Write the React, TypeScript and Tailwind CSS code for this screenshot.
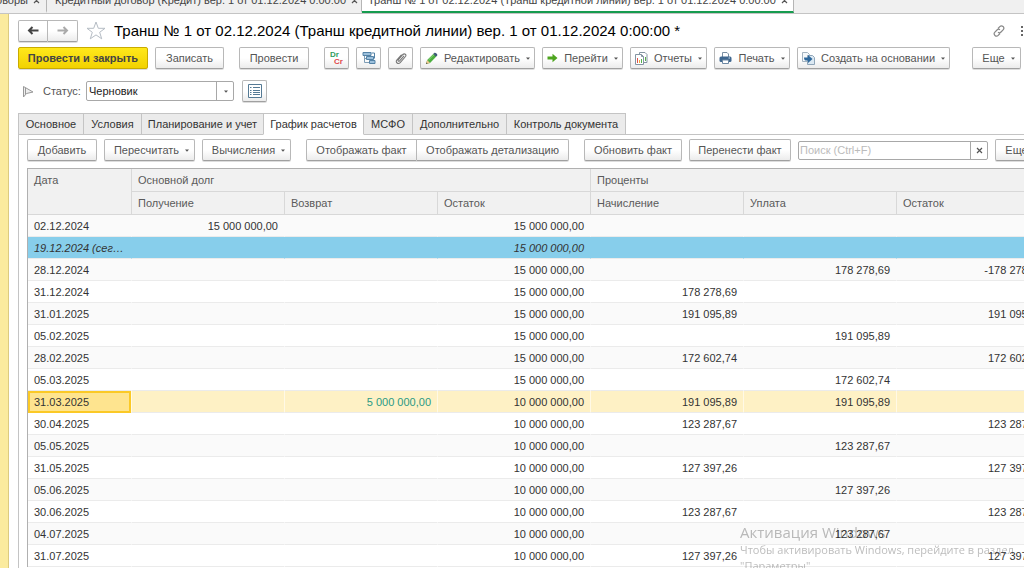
import type { ReactNode } from 'react';
import clsx from 'clsx';

const windowTabs = [
  { title: 'Договоры', width: 'w-[47px] justify-end', active: false },
  { title: 'Кредитный договор (Кредит) вер. 1 от 01.12.2024 0:00:00', width: 'w-[315px] pl-2', active: false },
  { title: 'Транш № 1 от 02.12.2024 (Транш кредитной линии) вер. 1 от 01.12.2024 0:00:00', width: 'w-[432px] pl-[6px]', active: true },
];

const sections = [
  { title: 'Основное', width: 'w-[66px]' },
  { title: 'Условия', width: 'w-[59px]' },
  { title: 'Планирование и учет', width: 'w-[123px]' },
  { title: 'График расчетов', width: 'w-[101px]', active: true },
  { title: 'МСФО', width: 'w-[50px]' },
  { title: 'Дополнительно', width: 'w-[95px]' },
  { title: 'Контроль документа', width: 'w-[120px]' },
];

type Row = {
  date: string;
  received?: string;
  returned?: string;
  debt: string;
  accrued?: string;
  paid?: string;
  rest?: string;
};

const rows: Row[] = [
  { date: '02.12.2024', received: '15 000 000,00', debt: '15 000 000,00' },
  { date: '19.12.2024 (сегодня)', debt: '15 000 000,00' },
  { date: '28.12.2024', debt: '15 000 000,00', paid: '178 278,69', rest: '-178 278,69' },
  { date: '31.12.2024', debt: '15 000 000,00', accrued: '178 278,69' },
  { date: '31.01.2025', debt: '15 000 000,00', accrued: '191 095,89', rest: '191 095,89' },
  { date: '05.02.2025', debt: '15 000 000,00', paid: '191 095,89' },
  { date: '28.02.2025', debt: '15 000 000,00', accrued: '172 602,74', rest: '172 602,74' },
  { date: '05.03.2025', debt: '15 000 000,00', paid: '172 602,74' },
  { date: '31.03.2025', returned: '5 000 000,00', debt: '10 000 000,00', accrued: '191 095,89', paid: '191 095,89' },
  { date: '30.04.2025', debt: '10 000 000,00', accrued: '123 287,67', rest: '123 287,67' },
  { date: '05.05.2025', debt: '10 000 000,00', paid: '123 287,67' },
  { date: '31.05.2025', debt: '10 000 000,00', accrued: '127 397,26', rest: '127 397,26' },
  { date: '05.06.2025', debt: '10 000 000,00', paid: '127 397,26' },
  { date: '30.06.2025', debt: '10 000 000,00', accrued: '123 287,67', rest: '123 287,67' },
  { date: '04.07.2025', debt: '10 000 000,00', paid: '123 287,67' },
  { date: '31.07.2025', debt: '10 000 000,00', accrued: '127 397,26', rest: '127 397,26' },
];

const TODAY = 1;
const SELECTED = 8;

const buttonLook =
  'flex h-[22px] shrink-0 items-center justify-center whitespace-nowrap border border-[#b8b8b8] border-b-[#a0a0a0] bg-linear-to-b from-white from-50% to-[#ececec] text-[#555] shadow-[0_1px_0_#ddd]';

function Button({ width, className, label, children }: { width: string; className?: string; label?: string; children: ReactNode }) {
  return (
    <button type="button" aria-label={label} className={clsx(buttonLook, 'rounded-[2px]', width, className)}>
      {children}
    </button>
  );
}

function Caret() {
  return (
    <svg width="4" height="3" viewBox="0 0 4 3" className="shrink-0" fill="#555">
      <path d="M0 .5h4L2 2.800z" />
    </svg>
  );
}

function Cross() {
  return (
    <svg width="7" height="7" viewBox="0 0 7 7" className="shrink-0" stroke="#555" strokeWidth="1.200">
      <path d="M1 1l5 5M6 1L1 6" />
    </svg>
  );
}

function Arrow({ color, flip }: { color: string; flip?: boolean }) {
  return (
    <svg width="12" height="9" viewBox="0 0 12 9" fill="none" stroke={color} strokeWidth="2" className={clsx(flip && 'rotate-180')}>
      <path d="M11.500 4.500H2M5.500 1L2 4.500 5.500 8" />
    </svg>
  );
}

function StructureIcon() {
  return (
    <svg width="14" height="14" viewBox="0 0 14 14">
      <path d="M2.500 5v6.500H7M2.500 7.500H5" fill="none" stroke="#7f9db5" />
      <g fill="#9cc0dc" stroke="#5482a6">
        <path d="M1 1.500h8v3H1zM4.500 5.500h7v3h-7zM7.500 9.500H13v3H7.500z" />
      </g>
      <path d="M9.500 2h3v5.500" fill="none" stroke="#5482a6" />
    </svg>
  );
}

function ClipIcon() {
  return (
    <svg width="12" height="13" viewBox="0 0 12 13" fill="none" stroke="#777" strokeWidth="1.100" strokeLinecap="round">
      <path d="M8.800 4.200L4.600 8.800c-.9 1-2.200 0-1.400-1L7.900 2.500c1.600-1.600 4 .2 2.600 2L5.200 10.600c-2 2.200-5.200-.3-3.400-2.600L6.200 3" />
    </svg>
  );
}

function PencilIcon() {
  return (
    <svg width="13" height="13" viewBox="0 0 13 13">
      <path d="M1 12l1.200-4L8.500 1.800l2.800 2.800L5 11z" fill="#4caf3f" />
      <path d="M8.200 2l1.300-1.200c.8-.8 3.600 1.600 2.700 2.600L11 4.800z" fill="#3e5878" />
      <path d="M1 12l1.200-4L5 11z" fill="#efc48d" />
      <path d="M1 12l.5-1.600 1.100 1.100z" fill="#444" />
      <path d="M3.500 8L9.200 2.500" stroke="#8bd47b" />
    </svg>
  );
}

function GoIcon() {
  return (
    <svg width="11" height="10" viewBox="0 0 11 10" fill="#4ea51f">
      <path d="M.5 3.500h5V.8L10.500 5l-5 4.200V6.500h-5z" />
    </svg>
  );
}

function ReportIcon() {
  return (
    <svg width="13" height="13" viewBox="0 0 13 13">
      <path d="M4.500.5h5.500l2 2v8H4.500z" fill="#fff" stroke="#8595a2" />
      <path d="M10.500 5v4" stroke="#54b04a" />
      <path d="M.5 2.500h6l2 2v8h-8z" fill="#fff" stroke="#8595a2" />
      <path d="M6.500 2.500v2h2" fill="none" stroke="#8595a2" />
      <path d="M2.500 6v5" stroke="#e4534a" />
      <path d="M4.500 8v3" stroke="#eea53a" />
      <path d="M6.500 7v4" stroke="#54b04a" />
    </svg>
  );
}

function PrintIcon() {
  return (
    <svg width="13" height="12" viewBox="0 0 13 12">
      <path d="M3.500 5V.5h4.500l1.500 1.500v3" fill="#fff" stroke="#7a8fa3" />
      <rect x=".5" y="4.500" width="12" height="5.500" rx="1.500" fill="#3f678f" />
      <path d="M3.500 8h6v3.500h-6z" fill="#fff" stroke="#6d88a3" />
      <path d="M9.500 6h1.500" stroke="#cfe0ee" />
    </svg>
  );
}

function BasedOnIcon() {
  return (
    <svg width="13" height="13" viewBox="0 0 13 13">
      <path d="M.5.5h5l2 2v7h-7z" fill="#f5f8fa" stroke="#a3b3c0" />
      <path d="M5.500 3.500h5l2 2v7h-7z" fill="#dbe8f2" stroke="#8fa5b8" />
      <path d="M2 5.500h4V3L10.500 7 6 11V8.500H3.500C2.500 8.500 2 7 2 5.500z" fill="#2e689c" />
    </svg>
  );
}

const cell = 'overflow-hidden text-ellipsis whitespace-nowrap border-b border-b-[#ebebeb] px-[6px]';
const headCell = 'border-b border-l border-[#d8d8d8] px-[6px] text-left font-normal';

export default function App() {
  return (
    <div className="flex h-screen flex-col overflow-hidden bg-white font-['Liberation_Sans',Arial,sans-serif] text-[11px] leading-4 text-[#333]">
      {/* Open windows */}
      <nav className="flex h-[14px] shrink-0 items-end overflow-hidden border-b border-[#c4c4c4] bg-[#f0f0f0]">
        {windowTabs.map((tab) => (
          <div
            key={tab.title}
            className={clsx(
              'flex h-6 shrink-0 items-center gap-[5px] border-r border-b-2 border-r-[#b5b5b5] pr-[6px] whitespace-nowrap text-[#444]',
              tab.width,
              tab.active ? 'border-b-[#169c4f] bg-white' : 'border-b-transparent',
            )}
          >
            <a href="#">{tab.title}</a>
            <Cross />
          </div>
        ))}
      </nav>

      <div className="flex min-h-0 grow">
        <aside className="w-[9px] shrink-0 border-r border-[#dccb80] bg-[#fbeb9e]" />

        <main className="flex min-w-0 grow flex-col pl-[9px]">
          {/* Title */}
          <header className="flex h-[33px] shrink-0 items-center">
            <div className="flex">
              <button type="button" aria-label="Назад" className={clsx(buttonLook, 'w-[30px] rounded-l-[2px]')}>
                <Arrow color="#444" />
              </button>
              <button type="button" aria-label="Вперед" className={clsx(buttonLook, 'w-[30px] rounded-r-[2px] border-l-0')}>
                <Arrow color="#aaa" flip />
              </button>
            </div>
            <svg width="20" height="19" viewBox="0 0 20 19" className="ml-2 shrink-0" fill="#fff" stroke="#b5bcc4">
              <path d="M10 1l2.300 6.300H19l-5.300 4 2 6.500L10 13.900l-5.700 3.900 2-6.500L1 7.300h6.700z" />
            </svg>
            <h1 className="ml-2 text-[15px] whitespace-nowrap text-black">
              Транш № 1 от 02.12.2024 (Транш кредитной линии) вер. 1 от 01.12.2024 0:00:00 *
            </h1>
            <svg width="12" height="12" viewBox="0 0 12 12" className="ml-auto shrink-0" fill="none" stroke="#888" strokeWidth="1.200">
              <path d="M5 3.500l1.800-1.900a2.200 2.200 0 0 1 3.300 3.200L8 7a2.200 2.200 0 0 1-3 .2M7 8.500l-1.800 1.900a2.200 2.200 0 0 1-3.300-3.200L4 5a2.200 2.200 0 0 1 3-.2" />
            </svg>
            <svg width="3" height="10" viewBox="0 0 3 10" className="ml-4 shrink-0" fill="#666">
              <path d="M0 0h2v2H0zM0 4h2v2H0zM0 8h2v2H0z" />
            </svg>
          </header>

          {/* Document commands */}
          <div className="flex shrink-0 gap-[7px]">
            <button
              type="button"
              className="h-[22px] w-[130px] shrink-0 rounded-[2px] border border-[#c9ab00] bg-linear-to-b from-[#ffe81a] to-[#f2d200] font-bold whitespace-nowrap text-[#444] shadow-[0_1px_0_#ddd]"
            >
              Провести и закрыть
            </button>
            <Button width="w-[69px]">Записать</Button>
            <Button width="w-[70px]" className="ml-2">Провести</Button>
            <Button width="w-[25px]" className="ml-2" label="Дт Кт">
              <span className="flex flex-col text-[8px] leading-[7px] font-bold">
                <span className="pr-1 text-[#2f9d5c]">Dr</span>
                <span className="pl-1 text-[#e0484a]">Cr</span>
              </span>
            </Button>
            <Button width="w-[25px]" label="Структура подчиненности"><StructureIcon /></Button>
            <Button width="w-[25px]" label="Файлы"><ClipIcon /></Button>
            <Button width="w-[115px]" className="gap-[6px]"><PencilIcon />Редактировать<Caret /></Button>
            <Button width="w-[81px]" className="gap-[6px]"><GoIcon />Перейти<Caret /></Button>
            <Button width="w-[77px]" className="gap-[6px]"><ReportIcon />Отчеты<Caret /></Button>
            <Button width="w-[76px]" className="gap-[6px]"><PrintIcon />Печать<Caret /></Button>
            <Button width="w-[153px]" className="gap-[6px]"><BasedOnIcon />Создать на основании<Caret /></Button>
            <Button width="w-[49px]" className="mr-[3px] ml-auto gap-[6px] pl-1">Еще<Caret /></Button>
          </div>

          {/* Status */}
          <div className="flex h-[44px] shrink-0 items-center">
            <svg width="13" height="13" viewBox="0 0 13 13" fill="#eee" stroke="#999" className="ml-1">
              <path d="M1.500 12V1.500l9.500 5.500-6.500 1.500z" />
              <path d="M3.500 3v6" />
            </svg>
            <label htmlFor="status" className="ml-2 w-[43px] text-[#555]">Статус:</label>
            <div className="relative h-[20px] w-[148px]">
              <select id="status" className="h-full w-full appearance-none rounded-[2px] border border-[#a8a8a8] bg-white pl-[2px] text-[#222]">
                <option>Черновик</option>
              </select>
              <span className="pointer-events-none absolute inset-y-0 right-0 flex w-[18px] items-center justify-center border-l border-[#a8a8a8]">
                <Caret />
              </span>
            </div>
            <Button width="w-[25px]" className="ml-2" label="Список">
              <svg width="14" height="14" viewBox="0 0 14 14" fill="none" stroke="#557a95">
                <path d="M.5.5h13v13H.5z" fill="#fff" />
                <path d="M2 3.500h1.500M5 3.500h7M2 6.500h1.500M5 6.500h7M2 8.500h1.500M5 8.500h7M2 10.500h1.500M5 10.500h7" />
              </svg>
            </Button>
          </div>

          {/* Sections */}
          <nav className="flex h-[22px] shrink-0 border-b border-[#c4c4c4]">
            {sections.map((s) => (
              <a
                key={s.title}
                href="#"
                className={clsx(
                  '-mr-px flex h-[22px] shrink-0 items-center justify-center border border-[#c4c4c4] pb-px whitespace-nowrap',
                  s.width,
                  s.active ? 'z-10 border-b-white bg-white' : 'bg-[#ebebeb]',
                )}
              >
                {s.title}
              </a>
            ))}
          </nav>

          <section className="min-h-0 grow overflow-hidden border-l border-[#c4c4c4] pt-[4px] pl-2">
            <div className="flex gap-[7px]">
              <Button width="w-[70px]">Добавить</Button>
              <Button width="w-[91px]" className="gap-[6px] pl-1">Пересчитать<Caret /></Button>
              <Button width="w-[89px]" className="gap-[6px] pl-1">Вычисления<Caret /></Button>
              <div className="ml-2 flex">
                <button type="button" className={clsx(buttonLook, 'w-[111px] rounded-l-[2px]')}>Отображать факт</button>
                <button type="button" className={clsx(buttonLook, 'w-[152px] rounded-r-[2px] border-l-0')}>Отображать детализацию</button>
              </div>
              <Button width="w-[98px]" className="ml-2">Обновить факт</Button>
              <Button width="w-[102px]">Перенести факт</Button>
              <div className="flex h-[19px] w-[190px] shrink-0 self-center rounded-[2px] border border-[#a8a8a8]">
                <input aria-label="Поиск" placeholder="Поиск (Ctrl+F)" className="min-w-0 grow pl-px outline-none placeholder:text-[#bbb]" />
                <button type="button" aria-label="Очистить" className="flex w-[17px] items-center justify-center border-l border-[#a8a8a8]">
                  <Cross />
                </button>
              </div>
              <Button width="w-[49px]" className="gap-[6px] pl-1">Еще<Caret /></Button>
            </div>

            {/* Schedule */}
            <table className="mt-[7px] w-[1022px] table-fixed border-separate border-spacing-0 border-t border-l border-[#b0b0b0]">
              <colgroup>
                <col className="w-[103px]" />
                <col className="w-[153px]" />
                <col className="w-[153px]" />
                <col className="w-[153px]" />
                <col className="w-[153px]" />
                <col className="w-[153px]" />
                <col className="w-[153px]" />
              </colgroup>
              <thead className="bg-[#f1f1f1] text-[#5a5a5a]">
                <tr className="h-[23px]">
                  <th rowSpan={2} className="border-b border-[#d8d8d8] px-[6px] pt-[3px] text-left align-top font-normal">Дата</th>
                  <th colSpan={3} className={headCell}>Основной долг</th>
                  <th colSpan={3} className={headCell}>Проценты</th>
                </tr>
                <tr className="h-[23px]">
                  {['Получение', 'Возврат', 'Остаток', 'Начисление', 'Уплата', 'Остаток'].map((name, i) => (
                    <th key={i} className={headCell}>{name}</th>
                  ))}
                </tr>
              </thead>
              <tbody>
                {rows.map((row, i) => {
                  const selected = i === SELECTED;
                  const look = clsx(cell, 'border-l text-right', selected ? 'border-l-[#fff9e6]' : 'border-l-transparent');
                  return (
                    <tr
                      key={row.date}
                      className={clsx(
                        'h-[22px]',
                        i === TODAY && 'bg-[#87ceeb] italic',
                        selected && 'bg-[#fef1c5]',
                        i !== TODAY && !selected && (i % 2 ? 'bg-white' : 'bg-[#fafafa]'),
                      )}
                    >
                      <td className={clsx(cell, selected && 'bg-[#fee48f] outline-2 -outline-offset-2 outline-[#fbc926]')}>
                        {row.date}
                      </td>
                      <td className={look}>{row.received}</td>
                      <td className={clsx(look, 'text-[#2b9a84]')}>{row.returned}</td>
                      <td className={look}>{row.debt}</td>
                      <td className={look}>{row.accrued}</td>
                      <td className={look}>{row.paid}</td>
                      <td className={look}>{row.rest}</td>
                    </tr>
                  );
                })}
              </tbody>
            </table>
          </section>
        </main>
      </div>

      {/* System watermark over the desktop corner */}
      <div className="pointer-events-none fixed top-[522px] left-[740px] font-['Open_Sans','Noto_Sans',sans-serif] whitespace-nowrap text-[#bdbdbd] mix-blend-multiply">
        <p className="text-[15px] leading-[20px]">Активация Windows</p>
        <p className="text-[11px] leading-[16px]">Чтобы активировать Windows, перейдите в раздел</p>
        <p className="text-[11px] leading-[16px]">"Параметры".</p>
      </div>
    </div>
  );
}
